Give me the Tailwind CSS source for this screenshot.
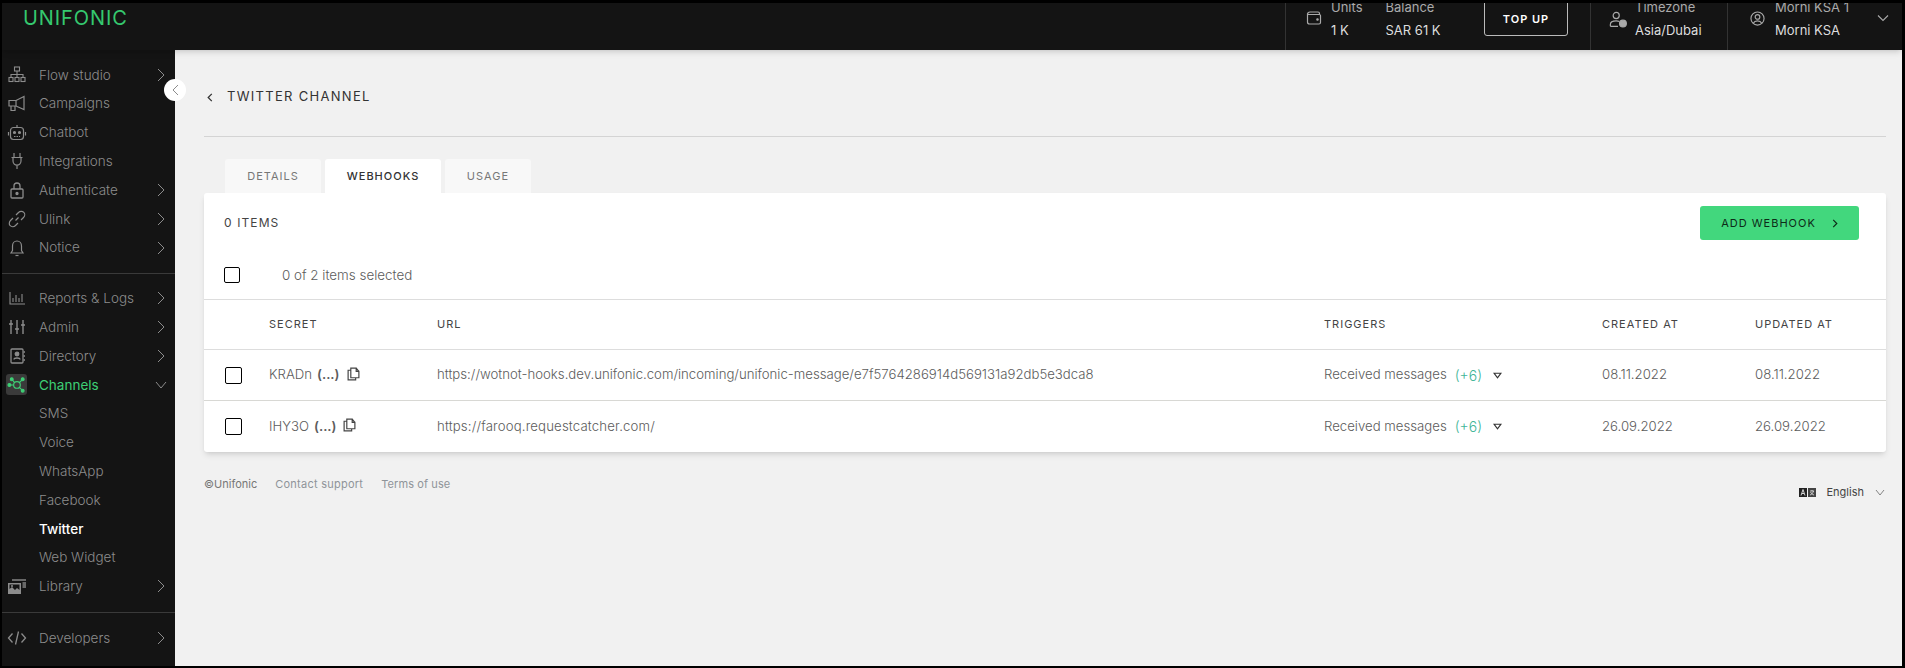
<!DOCTYPE html>
<html lang="en">
<head>
  <meta charset="UTF-8">
  <title>Twitter Channel</title>
  <script src="https://cdn.jsdelivr.net/npm/@tailwindcss/browser@4"></script>
</head>
<body class="bg-black font-['Inter',sans-serif]">
<div class="h-[668px] w-[1905px] bg-black pt-[3px] pl-[2px] pr-[3px] pb-[2px]">
  <div class="relative h-full flex flex-col overflow-hidden bg-[#f1f1f1]">

    <!-- top bar -->
    <header class="h-[47px] shrink-0 flex bg-[#141414] text-[#dddddd] shadow-md z-10">
      <div class="pl-[21px] pt-[3px] text-[#35c96f] text-[20px] leading-[24px] tracking-[0.9px] font-normal">UNIFONIC</div>
      <div class="ml-auto flex h-full">
        <div class="w-[305px] flex border-l border-[#333333] relative">
          <svg class="w-[16px] h-[16px] ml-[20px] mt-[7px] text-[#aaaaaa]" viewBox="0 0 16 16" fill="none" stroke="currentColor" stroke-width="1.2"><path d="M1.500 4.500C1.500 3 2.500 2 4 2H12C13 2 13.500 2.700 13.500 3.500V4.500H3C2 4.500 1.500 4 1.500 3.500V12C1.500 13.300 2.500 14 3.500 14H13C14 14 14.500 13.400 14.500 12.500V5.500C14.500 4.900 14 4.500 13.500 4.500"/><circle cx="11.500" cy="9.500" r=".7" fill="currentColor"/></svg>
          <div class="ml-[9px] -mt-[5px] text-[13px] leading-[18px]">
            <div class="text-[#aaaaaa]">Units</div>
            <div class="mt-[5px]">1 K</div>
          </div>
          <div class="ml-[23px] -mt-[5px] text-[13px] leading-[18px]">
            <div class="text-[#aaaaaa]">Balance</div>
            <div class="mt-[5px]">SAR 61 K</div>
          </div>
          <button class="absolute left-[198px] -top-[3px] w-[84px] h-[36px] border border-[#bbbbbb] rounded-[3px] text-white text-[11px] font-semibold tracking-[1px] pt-[3px]">TOP UP</button>
        </div>
        <div class="w-[137px] flex border-l border-[#333333]">
          <svg class="w-[18px] h-[18px] ml-[18px] mt-[8px] text-[#aaaaaa]" viewBox="0 0 20 20" fill="none" stroke="currentColor" stroke-width="1.3"><circle cx="8" cy="5" r="3.400"/><path d="M1.500 17V15C1.500 12.500 4 11 8 11C9.500 11 10.500 11.200 11.500 11.600M1.500 17H10"/><circle cx="15.500" cy="14" r="3.800" fill="currentColor"/></svg>
          <div class="ml-[8px] -mt-[5px] text-[13px] leading-[18px]">
            <div class="text-[#aaaaaa]">Timezone</div>
            <div class="mt-[5px]">Asia/Dubai</div>
          </div>
        </div>
        <div class="w-[175px] flex border-l border-[#333333]">
          <svg class="w-[15px] h-[15px] ml-[22px] mt-[8px] text-[#aaaaaa]" viewBox="0 0 16 16" fill="none" stroke="currentColor" stroke-width="1.2"><circle cx="8" cy="8" r="7"/><circle cx="8" cy="6.300" r="2.500"/><path d="M3.500 13C4.500 11 6 10.500 8 10.500S11.500 11 12.500 13"/></svg>
          <div class="ml-[10px] -mt-[5px] text-[13px] leading-[18px] w-[100px]">
            <div class="text-[#aaaaaa]">Morni KSA 1</div>
            <div class="mt-[5px]">Morni KSA</div>
          </div>
          <svg class="w-[12px] h-[12px] ml-[2px] mt-[9px] text-[#aaaaaa]" viewBox="0 0 12 12" fill="none" stroke="currentColor" stroke-width="1.100"><path d="M1 3.500L6 8.500L11 3.500"/></svg>
        </div>
      </div>
    </header>

    <div class="flex flex-1 min-h-0">
      <!-- sidebar -->
      <aside class="w-[173px] shrink-0 bg-[#141414] text-[13.5px] font-light text-[#8c8c8c] pt-[10.4px]">
        <div class="h-[28.8px] flex items-center">
          <svg class="w-[20px] h-[20px] ml-[5px] text-[#8c8c8c]" viewBox="0 0 20 20" fill="none" stroke="currentColor" stroke-width="1.100"><rect x="7.500" y="2" width="5" height="4"/><path d="M10 6V9.500M4 12V9.500H16V12M10 9.500V12"/><rect x="2" y="12.500" width="4" height="4"/><rect x="8" y="12.500" width="4" height="4"/><rect x="14" y="12.500" width="4" height="4"/></svg>
          <span class="ml-[12px]">Flow studio</span>
          <svg class="w-[8px] h-[14px] ml-auto mr-[10px]" viewBox="0 0 8 14" fill="none" stroke="currentColor" stroke-width="1"><path d="M1 1L7 7L1 13"/></svg>
        </div>
        <div class="h-[28.8px] flex items-center">
          <svg class="w-[20px] h-[20px] ml-[5px]" viewBox="0 0 20 20" fill="none" stroke="currentColor" stroke-width="1.200"><path d="M2 6.500H9L17 2.500V15.500L9 12H2V6.500Z"/><path d="M9 6.500V12M4 12V16.500H8V12"/></svg>
          <span class="ml-[12px]">Campaigns</span>
        </div>
        <div class="h-[28.8px] flex items-center">
          <svg class="w-[20px] h-[20px] ml-[5px]" viewBox="0 0 20 20" fill="none" stroke="currentColor" stroke-width="1.200"><rect x="3.500" y="5.500" width="13" height="12" rx="3"/><path d="M10 5.500V3M1.500 10V13.500M18.500 10V13.500"/><circle cx="7.500" cy="10.500" r="1" fill="currentColor"/><circle cx="12.500" cy="10.500" r="1" fill="currentColor"/><path d="M7 14.500H13" stroke-dasharray="1.500 1"/></svg>
          <span class="ml-[12px]">Chatbot</span>
        </div>
        <div class="h-[28.8px] flex items-center">
          <svg class="w-[20px] h-[20px] ml-[5px]" viewBox="0 0 20 20" fill="none" stroke="currentColor" stroke-width="1.200"><path d="M7 2V6M13 2V6M4.500 6.500H15.500M6 6.500V10C6 12.500 8 14 10 14S14 12.500 14 10V6.500M10 14V18"/></svg>
          <span class="ml-[12px]">Integrations</span>
        </div>
        <div class="h-[28.8px] flex items-center">
          <svg class="w-[20px] h-[20px] ml-[5px]" viewBox="0 0 20 20" fill="none" stroke="currentColor" stroke-width="1.300"><rect x="4" y="9" width="12" height="9" rx="1"/><path d="M7 9V6C7 4 8.300 3 10 3S13 4 13 6V9"/><circle cx="10" cy="13.500" r="1" fill="currentColor"/></svg>
          <span class="ml-[12px]">Authenticate</span>
          <svg class="w-[8px] h-[14px] ml-auto mr-[10px]" viewBox="0 0 8 14" fill="none" stroke="currentColor" stroke-width="1"><path d="M1 1L7 7L1 13"/></svg>
        </div>
        <div class="h-[28.8px] flex items-center">
          <svg class="w-[20px] h-[20px] ml-[5px]" viewBox="0 0 20 20" fill="none" stroke="currentColor" stroke-width="1.200"><path d="M8.500 11.500L11.500 8.500M9 6L11.500 3.500C13 2 15.500 2 16.800 3.300S18 7 16.500 8.500L14 11M11 14L8.500 16.500C7 18 4.500 18 3.200 16.700S2 13 3.500 11.500L6 9"/></svg>
          <span class="ml-[12px]">Ulink</span>
          <svg class="w-[8px] h-[14px] ml-auto mr-[10px]" viewBox="0 0 8 14" fill="none" stroke="currentColor" stroke-width="1"><path d="M1 1L7 7L1 13"/></svg>
        </div>
        <div class="h-[28.8px] flex items-center">
          <svg class="w-[20px] h-[20px] ml-[5px]" viewBox="0 0 20 20" fill="none" stroke="currentColor" stroke-width="1.200"><path d="M4 15H16L14.500 12.500V8C14.500 5 12.500 3 10 3S5.500 5 5.500 8V12.500L4 15Z"/><path d="M8.500 17.500H11.500"/></svg>
          <span class="ml-[12px]">Notice</span>
          <svg class="w-[8px] h-[14px] ml-auto mr-[10px]" viewBox="0 0 8 14" fill="none" stroke="currentColor" stroke-width="1"><path d="M1 1L7 7L1 13"/></svg>
        </div>
        <div class="mt-[11px] mb-[10px] h-px bg-[#3a3a3a]"></div>
        <div class="h-[28.8px] flex items-center">
          <svg class="w-[20px] h-[20px] ml-[5px]" viewBox="0 0 20 20" fill="none" stroke="currentColor" stroke-width="1.100"><path d="M3 4V16H18M6 14V10M9 14V7M12 14V10M15 14V6"/></svg>
          <span class="ml-[12px]">Reports &amp; Logs</span>
          <svg class="w-[8px] h-[14px] ml-auto mr-[10px]" viewBox="0 0 8 14" fill="none" stroke="currentColor" stroke-width="1"><path d="M1 1L7 7L1 13"/></svg>
        </div>
        <div class="h-[28.8px] flex items-center">
          <svg class="w-[20px] h-[20px] ml-[5px]" viewBox="0 0 20 20" fill="none" stroke="currentColor" stroke-width="1.400"><path d="M4 3V17M10 3V17M16 3V17M2 7H6M8 12H12M14 8H18"/></svg>
          <span class="ml-[12px]">Admin</span>
          <svg class="w-[8px] h-[14px] ml-auto mr-[10px]" viewBox="0 0 8 14" fill="none" stroke="currentColor" stroke-width="1"><path d="M1 1L7 7L1 13"/></svg>
        </div>
        <div class="h-[28.8px] flex items-center">
          <svg class="w-[20px] h-[20px] ml-[5px]" viewBox="0 0 20 20" fill="none" stroke="currentColor" stroke-width="1.300"><rect x="4" y="3" width="12" height="14" rx="1"/><circle cx="10" cy="8" r="1.800" fill="currentColor"/><path d="M7 13.500C7 11.500 13 11.500 13 13.500M16.500 6H18M16.500 10H18M16.500 14H18"/></svg>
          <span class="ml-[12px]">Directory</span>
          <svg class="w-[8px] h-[14px] ml-auto mr-[10px]" viewBox="0 0 8 14" fill="none" stroke="currentColor" stroke-width="1"><path d="M1 1L7 7L1 13"/></svg>
        </div>
        <div class="h-[28.8px] flex items-center text-[#3ecf75]">
          <span class="w-[21px] h-[21px] ml-[4px] flex items-center justify-center rounded-[3px] bg-[#3a3a3a]">
            <svg class="w-[19px] h-[19px]" viewBox="0 0 20 20" fill="none" stroke="currentColor" stroke-width="1.200"><circle cx="10.500" cy="10.500" r="3.500"/><path d="M3 10.500H7M8 8L5.500 5M13 8L16 5M13 13L16 16"/><circle cx="2.500" cy="10.500" r="1.500" fill="currentColor"/><circle cx="5" cy="4.500" r="1.500" fill="currentColor"/><circle cx="16.500" cy="4.500" r="1.500" fill="currentColor"/><circle cx="16.500" cy="16.500" r="1.500" fill="currentColor"/></svg>
          </span>
          <span class="ml-[12px] font-normal">Channels</span>
          <svg class="w-[12px] h-[8px] ml-auto mr-[8px] text-[#8c8c8c]" viewBox="0 0 12 8" fill="none" stroke="currentColor" stroke-width="1"><path d="M1 1L6 7L11 1"/></svg>
        </div>
        <div class="h-[28.8px] flex items-center pl-[37px]">SMS</div>
        <div class="h-[28.8px] flex items-center pl-[37px]">Voice</div>
        <div class="h-[28.8px] flex items-center pl-[37px]">WhatsApp</div>
        <div class="h-[28.8px] flex items-center pl-[37px]">Facebook</div>
        <div class="h-[28.8px] flex items-center pl-[37px] text-white font-medium">Twitter</div>
        <div class="h-[28.8px] flex items-center pl-[37px]">Web Widget</div>
        <div class="h-[28.8px] flex items-center">
          <svg class="w-[20px] h-[20px] ml-[5px]" viewBox="0 0 20 20" fill="currentColor"><path d="M1 7H14V18H1V7ZM2.500 8.500V13L5 11L8 14L10 12L12.500 14V8.500H2.500Z"/><circle cx="5" cy="10" r="1"/><rect x="5" y="3" width="14" height="2" opacity=".7"/><rect x="15.500" y="6" width="3.500" height="6" opacity=".7"/></svg>
          <span class="ml-[12px]">Library</span>
          <svg class="w-[8px] h-[14px] ml-auto mr-[10px]" viewBox="0 0 8 14" fill="none" stroke="currentColor" stroke-width="1"><path d="M1 1L7 7L1 13"/></svg>
        </div>
        <div class="mt-[11px] mb-[11px] h-px bg-[#3a3a3a]"></div>
        <div class="h-[28.8px] flex items-center">
          <svg class="w-[20px] h-[20px] ml-[5px]" viewBox="0 0 20 20" fill="none" stroke="currentColor" stroke-width="1.300"><path d="M5.500 5.500L1.500 10L5.500 14.500M14.500 5.500L18.500 10L14.500 14.500M11.500 3.500L8.500 16.500"/></svg>
          <span class="ml-[12px]">Developers</span>
          <svg class="w-[8px] h-[14px] ml-auto mr-[10px]" viewBox="0 0 8 14" fill="none" stroke="currentColor" stroke-width="1"><path d="M1 1L7 7L1 13"/></svg>
        </div>
      </aside>

      <!-- main -->
      <main class="flex-1 min-w-0 pl-[29px] pr-[16px] text-[#5c5c5c] text-[13.2px] font-light">
        <div class="h-[87px] border-b border-[#d4d4d4] flex items-center pt-[8px] pl-[3px]">
          <svg class="w-[6px] h-[9px] text-[#333333]" viewBox="0 0 6 10" fill="none" stroke="currentColor" stroke-width="1.400"><path d="M5 1L1 5L5 9"/></svg>
          <h1 class="ml-[14px] text-[13px] font-normal tracking-[1.3px] text-[#333333]">TWITTER CHANNEL</h1>
        </div>

        <div class="flex gap-[4px] pl-[21px] pt-[22px] text-[11px] font-normal tracking-[1px] h-[56px]">
          <div class="w-[96px] h-[34px] flex items-center justify-center rounded-t-[3px] bg-[#f8f8f8] text-[#777777]">DETAILS</div>
          <div class="w-[116px] h-[34px] flex items-center justify-center rounded-t-[3px] bg-white text-[#333333] font-medium">WEBHOOKS</div>
          <div class="w-[86px] h-[34px] flex items-center justify-center rounded-t-[3px] bg-[#f8f8f8] text-[#777777]">USAGE</div>
        </div>

        <section class="bg-white rounded-[3px] shadow-md">
          <div class="h-[58px] pl-[20px] pr-[27px] flex items-start">
            <span class="mt-[22px] text-[12px] leading-[16px] font-normal tracking-[1.100px] text-[#444444]">0 ITEMS</span>
            <button class="ml-auto mt-[13px] w-[159px] h-[34px] flex items-center justify-center gap-[16px] rounded-[3px] bg-[#42d77d] text-[#0d2b18] text-[11px] font-normal tracking-[1px]">ADD WEBHOOK
              <svg class="w-[6px] h-[9px]" viewBox="0 0 6 10" fill="none" stroke="currentColor" stroke-width="1.300"><path d="M1 1L5 5L1 9"/></svg>
            </button>
          </div>
          <div class="h-[49px] pl-[20px] flex items-center border-b border-[#dddddd]">
            <span class="w-[16px] h-[16px] rounded-[2px] border border-black"></span>
            <span class="ml-[42px] text-[13.4px]">0 of 2 items selected</span>
          </div>
          <div class="h-[50px] grid grid-cols-[65px_168px_887px_278px_153px_1fr] items-center border-b border-[#dddddd] text-[11px] font-normal tracking-[1px] text-[#444444]">
            <span></span><span>SECRET</span><span>URL</span><span>TRIGGERS</span><span>CREATED AT</span><span>UPDATED AT</span>
          </div>
          <div class="h-[51px] grid grid-cols-[65px_168px_887px_278px_153px_1fr] items-center border-b border-[#d8d8d4]">
            <span class="ml-[21px] w-[17px] h-[17px] rounded-[2px] border border-black"></span>
            <span class="flex items-center">KRADn <b class="ml-[5px] font-semibold">(...)</b>
              <svg class="w-[13px] h-[14px] ml-[7px] -mt-[2px] text-[#444444]" viewBox="0 0 12 13" fill="none" stroke="currentColor" stroke-width="1.100"><path d="M3.500 3H1V12H8V10M3.500 1H8.500V4H11V10H3.500V1ZM8.500 1L11 4"/></svg>
            </span>
            <span>https://wotnot-hooks.dev.unifonic.com/incoming/unifonic-message/e7f5764286914d569131a92db5e3dca8</span>
            <span class="flex items-center">Received messages <span class="ml-[8px] text-[14px] text-[#3fb598]">(+6)</span>
              <svg class="w-[9px] h-[7px] ml-[11px] text-[#333333]" viewBox="0 0 8 6" fill="none" stroke="currentColor" stroke-width="1.100"><path d="M1 1H7L4 5Z"/></svg>
            </span>
            <span>08.11.2022</span><span>08.11.2022</span>
          </div>
          <div class="h-[51px] grid grid-cols-[65px_168px_887px_278px_153px_1fr] items-center">
            <span class="ml-[21px] w-[17px] h-[17px] rounded-[2px] border border-black"></span>
            <span class="flex items-center">IHY3O <b class="ml-[5px] font-semibold">(...)</b>
              <svg class="w-[13px] h-[14px] ml-[7px] -mt-[2px] text-[#444444]" viewBox="0 0 12 13" fill="none" stroke="currentColor" stroke-width="1.100"><path d="M3.500 3H1V12H8V10M3.500 1H8.500V4H11V10H3.500V1ZM8.500 1L11 4"/></svg>
            </span>
            <span class="tracking-[0.15px]">https://farooq.requestcatcher.com/</span>
            <span class="flex items-center">Received messages <span class="ml-[8px] text-[14px] text-[#3fb598]">(+6)</span>
              <svg class="w-[9px] h-[7px] ml-[11px] text-[#333333]" viewBox="0 0 8 6" fill="none" stroke="currentColor" stroke-width="1.100"><path d="M1 1H7L4 5Z"/></svg>
            </span>
            <span>26.09.2022</span><span>26.09.2022</span>
          </div>
        </section>

        <footer class="flex items-start pt-[24px] text-[11px] font-normal text-[#8f9499]">
          <span class="text-[#777777]">©Unifonic</span>
          <span class="ml-[18px] tracking-[0.25px]">Contact support</span>
          <span class="ml-[18px] tracking-[0.1px]">Terms of use</span>
          <div class="ml-auto mt-[8px] flex items-center text-[#444444]">
            <svg class="w-[17px] h-[9px]" viewBox="0 0 17 9"><rect width="8" height="9" fill="#222222"/><rect x="9" width="8" height="9" fill="#444444"/><path d="M2 7.500L4 1.500L6 7.500M3 5.500H5" fill="none" stroke="#ffffff" stroke-width=".8"/><path d="M11 3H15M13 2V3M14.500 3C14 5 12.500 6.500 11 7M11.500 4C12.500 5.500 13.500 6.500 15 7" fill="none" stroke="#ffffff" stroke-width=".7"/></svg>
            <span class="ml-[11px]">English</span>
            <svg class="w-[10px] h-[7px] ml-[11px] mr-[1px] text-[#777777]" viewBox="0 0 10 7" fill="none" stroke="currentColor" stroke-width=".9"><path d="M1 1L5 6L9 1"/></svg>
          </div>
        </footer>
      </main>
    </div>

    <!-- sidebar collapse handle -->
    <button class="absolute left-[162px] top-[76px] z-20 w-[22px] h-[22px] rounded-full bg-white flex items-center justify-center">
      <svg class="w-[7px] h-[12px] text-[#8c8c8c]" viewBox="0 0 7 12" fill="none" stroke="currentColor" stroke-width="1"><path d="M6 1L1 6L6 11"/></svg>
    </button>
  </div>
</div>
</body>
</html>
